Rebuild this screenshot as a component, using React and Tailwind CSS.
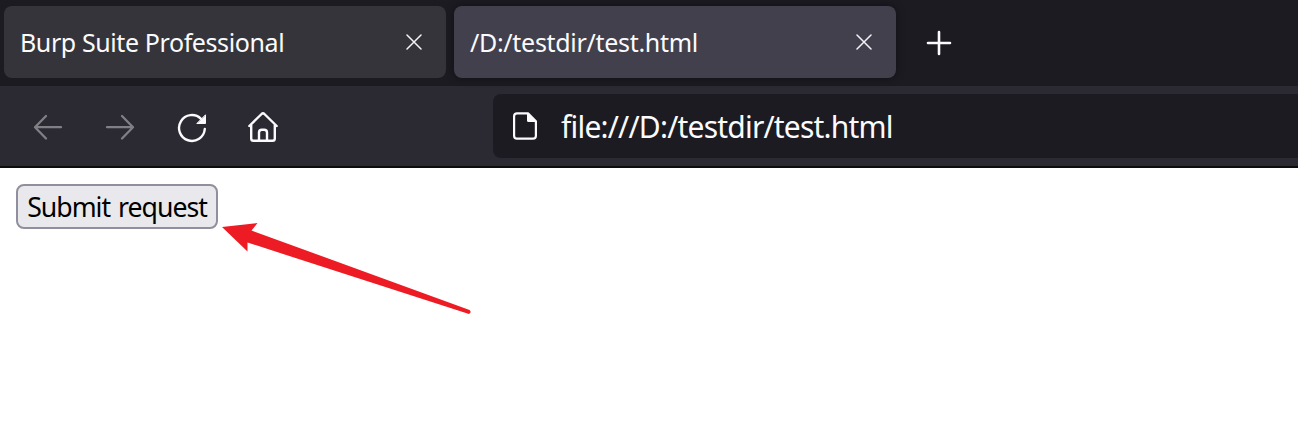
function CloseIcon() {
  return (
    <svg className="size-4 shrink-0" viewBox="0 0 16 16" fill="none" stroke="#f4f4f6" strokeWidth="1.5" strokeLinecap="round">
      <path d="M1 1L15 15M15 1L1 15" />
    </svg>
  );
}

function Tab({ title, active }) {
  return (
    <div
      className={
        "flex h-[72px] w-[442px] items-center justify-between rounded-lg pl-4 pr-6 " +
        (active ? "bg-[#42404d] shadow-[0_0_8px_rgba(0,0,0,0.45)]" : "bg-[#35343a]")
      }
    >
      <span
        className={
          "whitespace-nowrap pb-px text-[25px] leading-8 text-[#fbfbfe] " +
          (active ? "tracking-[-0.3px]" : "tracking-[-0.4px]")
        }
      >
        {title}
      </span>
      <CloseIcon />
    </div>
  );
}

function TabBar() {
  return (
    <div className="flex h-[86px] gap-2 bg-[#1c1b22] pl-1 pt-1.5">
      <Tab title="Burp Suite Professional" />
      <Tab title="/D:/testdir/test.html" active />
      <div className="flex h-[72px] items-center pl-[22px] pt-0.5">
        <svg className="size-[26px]" viewBox="0 0 26 26" fill="none" stroke="#fbfbfe" strokeWidth="2.6" strokeLinecap="round">
          <path d="M13 2V24M2 13H24" />
        </svg>
      </div>
    </div>
  );
}

function NavIcons() {
  return (
    <div className="flex w-[493px] shrink-0 gap-10 pl-8 pt-[17px]">
      <svg className="size-8" viewBox="0 0 32 32" fill="none" stroke="#807f85" strokeWidth="2.3" strokeLinecap="round" strokeLinejoin="round">
        <path d="M14 5L3 16.2L14 27.5M3 16.2H29" />
      </svg>
      <svg className="size-8" viewBox="0 0 32 32" fill="none" stroke="#807f85" strokeWidth="2.3" strokeLinecap="round" strokeLinejoin="round">
        <path d="M18 5L29 16.2L18 27.5M29 16.2H3" />
      </svg>
      <svg className="size-8" viewBox="0 0 32 32" fill="none" stroke="#fbfbfe" strokeWidth="2.4" strokeLinecap="round">
        <path d="M28.8 18A12.9 12.9 0 1 1 25 7.8" />
        <path d="M29.5 4.2V12.5H21.2Z" fill="#fbfbfe" strokeWidth="1" strokeLinejoin="round" />
      </svg>
      <svg className="size-8" viewBox="0 0 32 32" fill="none" stroke="#fbfbfe" strokeWidth="2.4" strokeLinecap="round" strokeLinejoin="round">
        <path d="M1.3 15L13.6 3Q15 1.7 16.4 3L28.7 15M3.2 13.5V27.5Q3.2 29.8 5.5 29.8H24.5Q26.8 29.8 26.8 27.5V13.5" />
        <path d="M11 29.5V21.5Q11 18.7 13.8 18.7H16.2Q19 18.7 19 21.5V29.5" />
      </svg>
    </div>
  );
}

function Toolbar() {
  return (
    <div className="flex h-[82px] border-b-2 border-[#0c0c0d] bg-[#2b2a33] pt-2">
      <NavIcons />
      <div className="flex h-16 flex-1 items-center rounded-l-lg bg-[#1c1b22] pl-[19px]">
        <svg className="h-7 w-[26px] shrink-0" viewBox="0 0 26 28" fill="none" stroke="#fbfbfe" strokeWidth="2.2" strokeLinejoin="round">
          <path d="M5 1.3H16L23.9 9.3V23.7Q23.9 26.7 21 26.7H5Q2.1 26.7 2.1 23.7V4.2Q2.1 1.3 5 1.3Z" />
          <path d="M15 1L24.5 10H16.5Q15 10 15 8.5Z" fill="#fbfbfe" stroke="none" />
        </svg>
        <span className="ml-[23px] whitespace-nowrap pt-0.5 text-[30px] leading-9 tracking-[-0.8px] text-[#fbfbfe]">
          file:///D:/testdir/test.html
        </span>
      </div>
    </div>
  );
}

export default function App() {
  return (
    <div className="relative h-[446px] w-[1298px] overflow-hidden bg-white font-['Noto_Sans',sans-serif]">
      <TabBar />
      <Toolbar />
      <div className="p-4">
        <button className="flex h-[45px] w-[202px] items-center justify-center whitespace-nowrap rounded-lg border-2 border-[#8f8f9d] bg-[#e9e9ed] text-[26.67px] leading-8 tracking-[-1px] [word-spacing:2px] text-black">
          Submit request
        </button>
      </div>
      <svg className="absolute left-[220px] top-[220px] h-24 w-[252px]" viewBox="0 0 252 96" fill="#ed1c24">
        <path d="M2 7L37.5 3L31.5 10.5L249.5 90Q252 92.5 249 94L27.5 22.5V31.5Z" />
      </svg>
    </div>
  );
}
